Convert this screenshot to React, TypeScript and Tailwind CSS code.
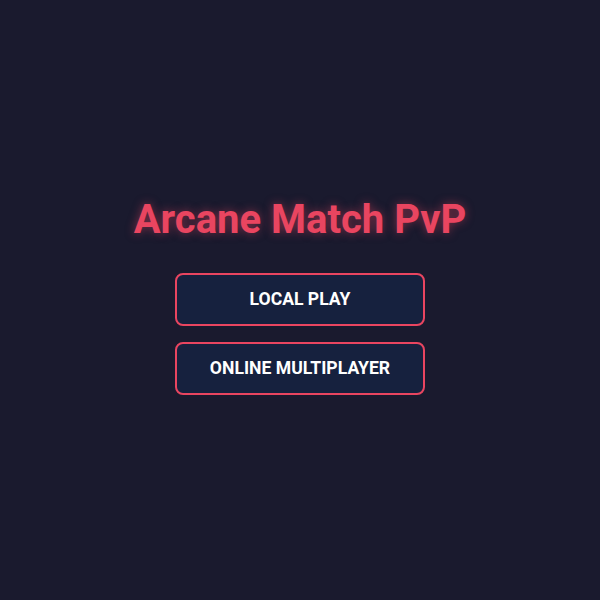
export default function App() {
  return (
    <div className="w-full h-[600px] bg-[#1a1a2e] flex flex-col items-center justify-center pb-[9px]" style={{ fontFamily: "Roboto, 'Liberation Sans', sans-serif" }}>
      <h1 className="text-[40px] leading-[48px] font-bold text-[#e94560] [text-shadow:0_0_10px_rgba(233,69,96,0.5)] mb-[29px]">
        Arcane Match PvP
      </h1>
      <div className="flex flex-col gap-[16px]">
        <button className="w-[250px] h-[53px] rounded-[8px] border-2 border-[#e94560] bg-[#16213e] text-white text-[17.6px] font-bold uppercase">
          Local Play
        </button>
        <button className="w-[250px] h-[53px] rounded-[8px] border-2 border-[#e94560] bg-[#16213e] text-white text-[17.6px] font-bold uppercase">
          Online Multiplayer
        </button>
      </div>
    </div>
  );
}
